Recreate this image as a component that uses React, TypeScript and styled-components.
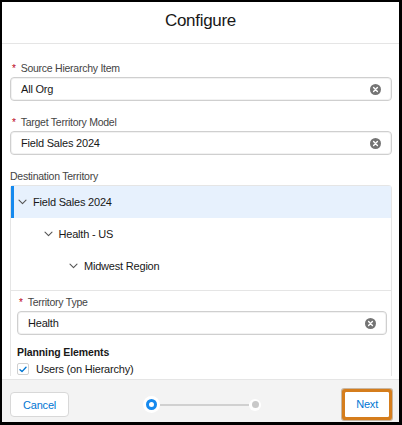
import React from "react";
import styled, { createGlobalStyle } from "styled-components";

const GlobalStyle = createGlobalStyle`
  html, body {
    margin: 0;
    padding: 0;
    background: #000;
  }
  * { box-sizing: border-box; }
  body {
    font-family: "Liberation Sans", Arial, sans-serif;
    color: #181818;
  }
`;

const Modal = styled.div`
  display: flex;
  flex-direction: column;
  width: 397px;
  height: 420px;
  margin: 2px 3px 3px 2px;
  background: #fff;
  overflow: hidden;
`;

const Header = styled.header`
  height: 42px;
  flex: none;
  display: flex;
  align-items: center;
  justify-content: center;
  padding-bottom: 3px;
  border-bottom: 1px solid #e5e5e5;
`;

const Title = styled.h2`
  margin: 0;
  font-size: 17px;
  font-weight: 400;
  letter-spacing: -0.3px;
  color: #181818;
`;

const Body = styled.div`
  flex: 1;
  overflow: hidden;
  padding: 17px 7px 0 8px;
`;

const Field = styled.div`
  margin-bottom: 14px;
`;

const Label = styled.div<{ $required?: boolean }>`
  display: flex;
  align-items: center;
  height: 14px;
  margin-bottom: 2px;
  padding-left: ${(p) => (p.$required ? "2px" : "0")};
  font-size: 10.5px;
  letter-spacing: -0.25px;
  color: #444;
`;

const Asterisk = styled.span`
  color: #ba0517;
  margin-right: 5px;
  font-size: 10px;
`;

const InputBox = styled.div`
  display: flex;
  align-items: center;
  justify-content: space-between;
  height: 24px;
  padding: 0 10px;
  border: 1px solid #cfcfcf;
  border-radius: 4px;
  background: #fff;
  box-shadow: inset 0 0 0 1px #f2f2f2;
  font-size: 11px;
  letter-spacing: -0.2px;
  color: #181818;
`;

const TreeBox = styled.div`
  border: 1px solid #e5e5e5;
  border-bottom: none;
  border-radius: 4px 4px 0 0;
`;

const TreeList = styled.div`
  padding-bottom: 8px;
`;

const TreeRow = styled.div<{ $level: number; $selected?: boolean }>`
  display: flex;
  align-items: center;
  gap: 6px;
  height: 32px;
  padding-left: ${(p) => 7 + p.$level * 25.5}px;
  font-size: 11px;
  letter-spacing: -0.2px;
  color: #181818;
  background: ${(p) => (p.$selected ? "#e7f1fd" : "transparent")};
  box-shadow: ${(p) => (p.$selected ? "inset 3px 0 0 #1589ee" : "none")};
`;

const Section = styled.div`
  border-top: 1px solid #e5e5e5;
  padding: 4px 4px 0 6px;
`;

const SubHeading = styled.div`
  margin-top: 10px;
  height: 14px;
  line-height: 14px;
  font-size: 10.5px;
  font-weight: 700;
  letter-spacing: -0.1px;
  color: #181818;
`;

const CheckRow = styled.label`
  display: flex;
  align-items: center;
  gap: 7px;
  height: 14px;
  margin-top: 3px;
  font-size: 11px;
  letter-spacing: -0.2px;
  color: #181818;
`;

const CheckBox = styled.span`
  display: flex;
  align-items: center;
  justify-content: center;
  width: 12px;
  height: 12px;
  border: 1px solid #d0d0d0;
  border-radius: 2px;
  background: #fff;
`;

const Footer = styled.footer`
  height: 43px;
  flex: none;
  display: flex;
  align-items: flex-start;
  padding: 12px 10px 0 8px;
  border-top: 1px solid #e5e5e5;
  background: #f3f3f3;
`;

const Button = styled.button<{ $highlight?: boolean }>`
  height: 25px;
  padding: 0 ${(p) => (p.$highlight ? "10px" : "12px")};
  border: 1px solid ${(p) => (p.$highlight ? "#fff" : "#d8d8d8")};
  border-radius: ${(p) => (p.$highlight ? "1px" : "4px")};
  background: #fff;
  font-family: "Liberation Sans", Arial, sans-serif;
  font-size: 11px;
  letter-spacing: -0.2px;
  color: #0176d3;
  margin-left: ${(p) => (p.$highlight ? "auto" : "0")};
  margin-top: ${(p) => (p.$highlight ? "-0.5px" : "0")};
  box-shadow: ${(p) => (p.$highlight ? "0 0 0 3px #d57d1c, 0 0 0 4px rgba(120, 70, 10, 0.35)" : "none")};
`;

const Progress = styled.div`
  display: flex;
  align-items: center;
  width: 118px;
  height: 25px;
  margin-left: 74px;
`;

const Step = styled.span<{ $active?: boolean }>`
  flex: none;
  display: flex;
  align-items: center;
  justify-content: center;
  width: ${(p) => (p.$active ? 17 : 12)}px;
  height: ${(p) => (p.$active ? 17 : 12)}px;
  border-radius: 50%;
  background: #fff;

  &::after {
    content: "";
    display: block;
    width: ${(p) => (p.$active ? 11 : 7)}px;
    height: ${(p) => (p.$active ? 11 : 7)}px;
    border-radius: 50%;
    box-sizing: border-box;
    background: ${(p) => (p.$active ? "#fff" : "#c9c9c9")};
    border: ${(p) => (p.$active ? "3px solid #1589ee" : "none")};
  }
`;

const Track = styled.span`
  flex: 1;
  height: 2px;
  background: #d0d0d0;
`;

const ClearIcon = () => (
  <svg width="11" height="11" viewBox="0 0 11 11">
    <circle cx="5.5" cy="5.5" r="5.5" fill="#747474" />
    <path d="M3.6 3.6 L7.4 7.4 M7.4 3.6 L3.6 7.4" stroke="#fff" strokeWidth="1.4" strokeLinecap="round" />
  </svg>
);

const Chevron = () => (
  <svg width="9" height="6" viewBox="0 0 9 6">
    <path d="M1 1.2 L4.5 4.6 L8 1.2" fill="none" stroke="#555" strokeWidth="1.1" strokeLinecap="round" strokeLinejoin="round" />
  </svg>
);

const Check = () => (
  <svg width="8" height="7" viewBox="0 0 8 7">
    <path d="M1 3.8 L3 5.6 L7 1.2" fill="none" stroke="#0176d3" strokeWidth="1.4" strokeLinecap="round" strokeLinejoin="round" />
  </svg>
);

const RequiredLabel = ({ children }: { children: React.ReactNode }) => (
  <Label $required>
    <Asterisk>*</Asterisk>
    {children}
  </Label>
);

const LookupInput = ({ value }: { value: string }) => (
  <InputBox>
    <span>{value}</span>
    <ClearIcon />
  </InputBox>
);

const TREE = [
  { name: "Field Sales 2024", level: 0, selected: true },
  { name: "Health - US", level: 1 },
  { name: "Midwest Region", level: 2 },
];

export default function App() {
  return (
    <>
      <GlobalStyle />
      <Modal>
        <Header>
          <Title>Configure</Title>
        </Header>
        <Body>
          <Field>
            <RequiredLabel>Source Hierarchy Item</RequiredLabel>
            <LookupInput value="All Org" />
          </Field>
          <Field>
            <RequiredLabel>Target Territory Model</RequiredLabel>
            <LookupInput value="Field Sales 2024" />
          </Field>
          <Label>Destination Territory</Label>
          <TreeBox>
            <TreeList>
              {TREE.map((node) => (
                <TreeRow key={node.name} $level={node.level} $selected={node.selected}>
                  <Chevron />
                  <span>{node.name}</span>
                </TreeRow>
              ))}
            </TreeList>
            <Section>
              <RequiredLabel>Territory Type</RequiredLabel>
              <LookupInput value="Health" />
              <SubHeading>Planning Elements</SubHeading>
              <CheckRow>
                <CheckBox>
                  <Check />
                </CheckBox>
                Users (on Hierarchy)
              </CheckRow>
            </Section>
          </TreeBox>
        </Body>
        <Footer>
          <Button>Cancel</Button>
          <Progress>
            <Step $active />
            <Track />
            <Step />
          </Progress>
          <Button $highlight>Next</Button>
        </Footer>
      </Modal>
    </>
  );
}
